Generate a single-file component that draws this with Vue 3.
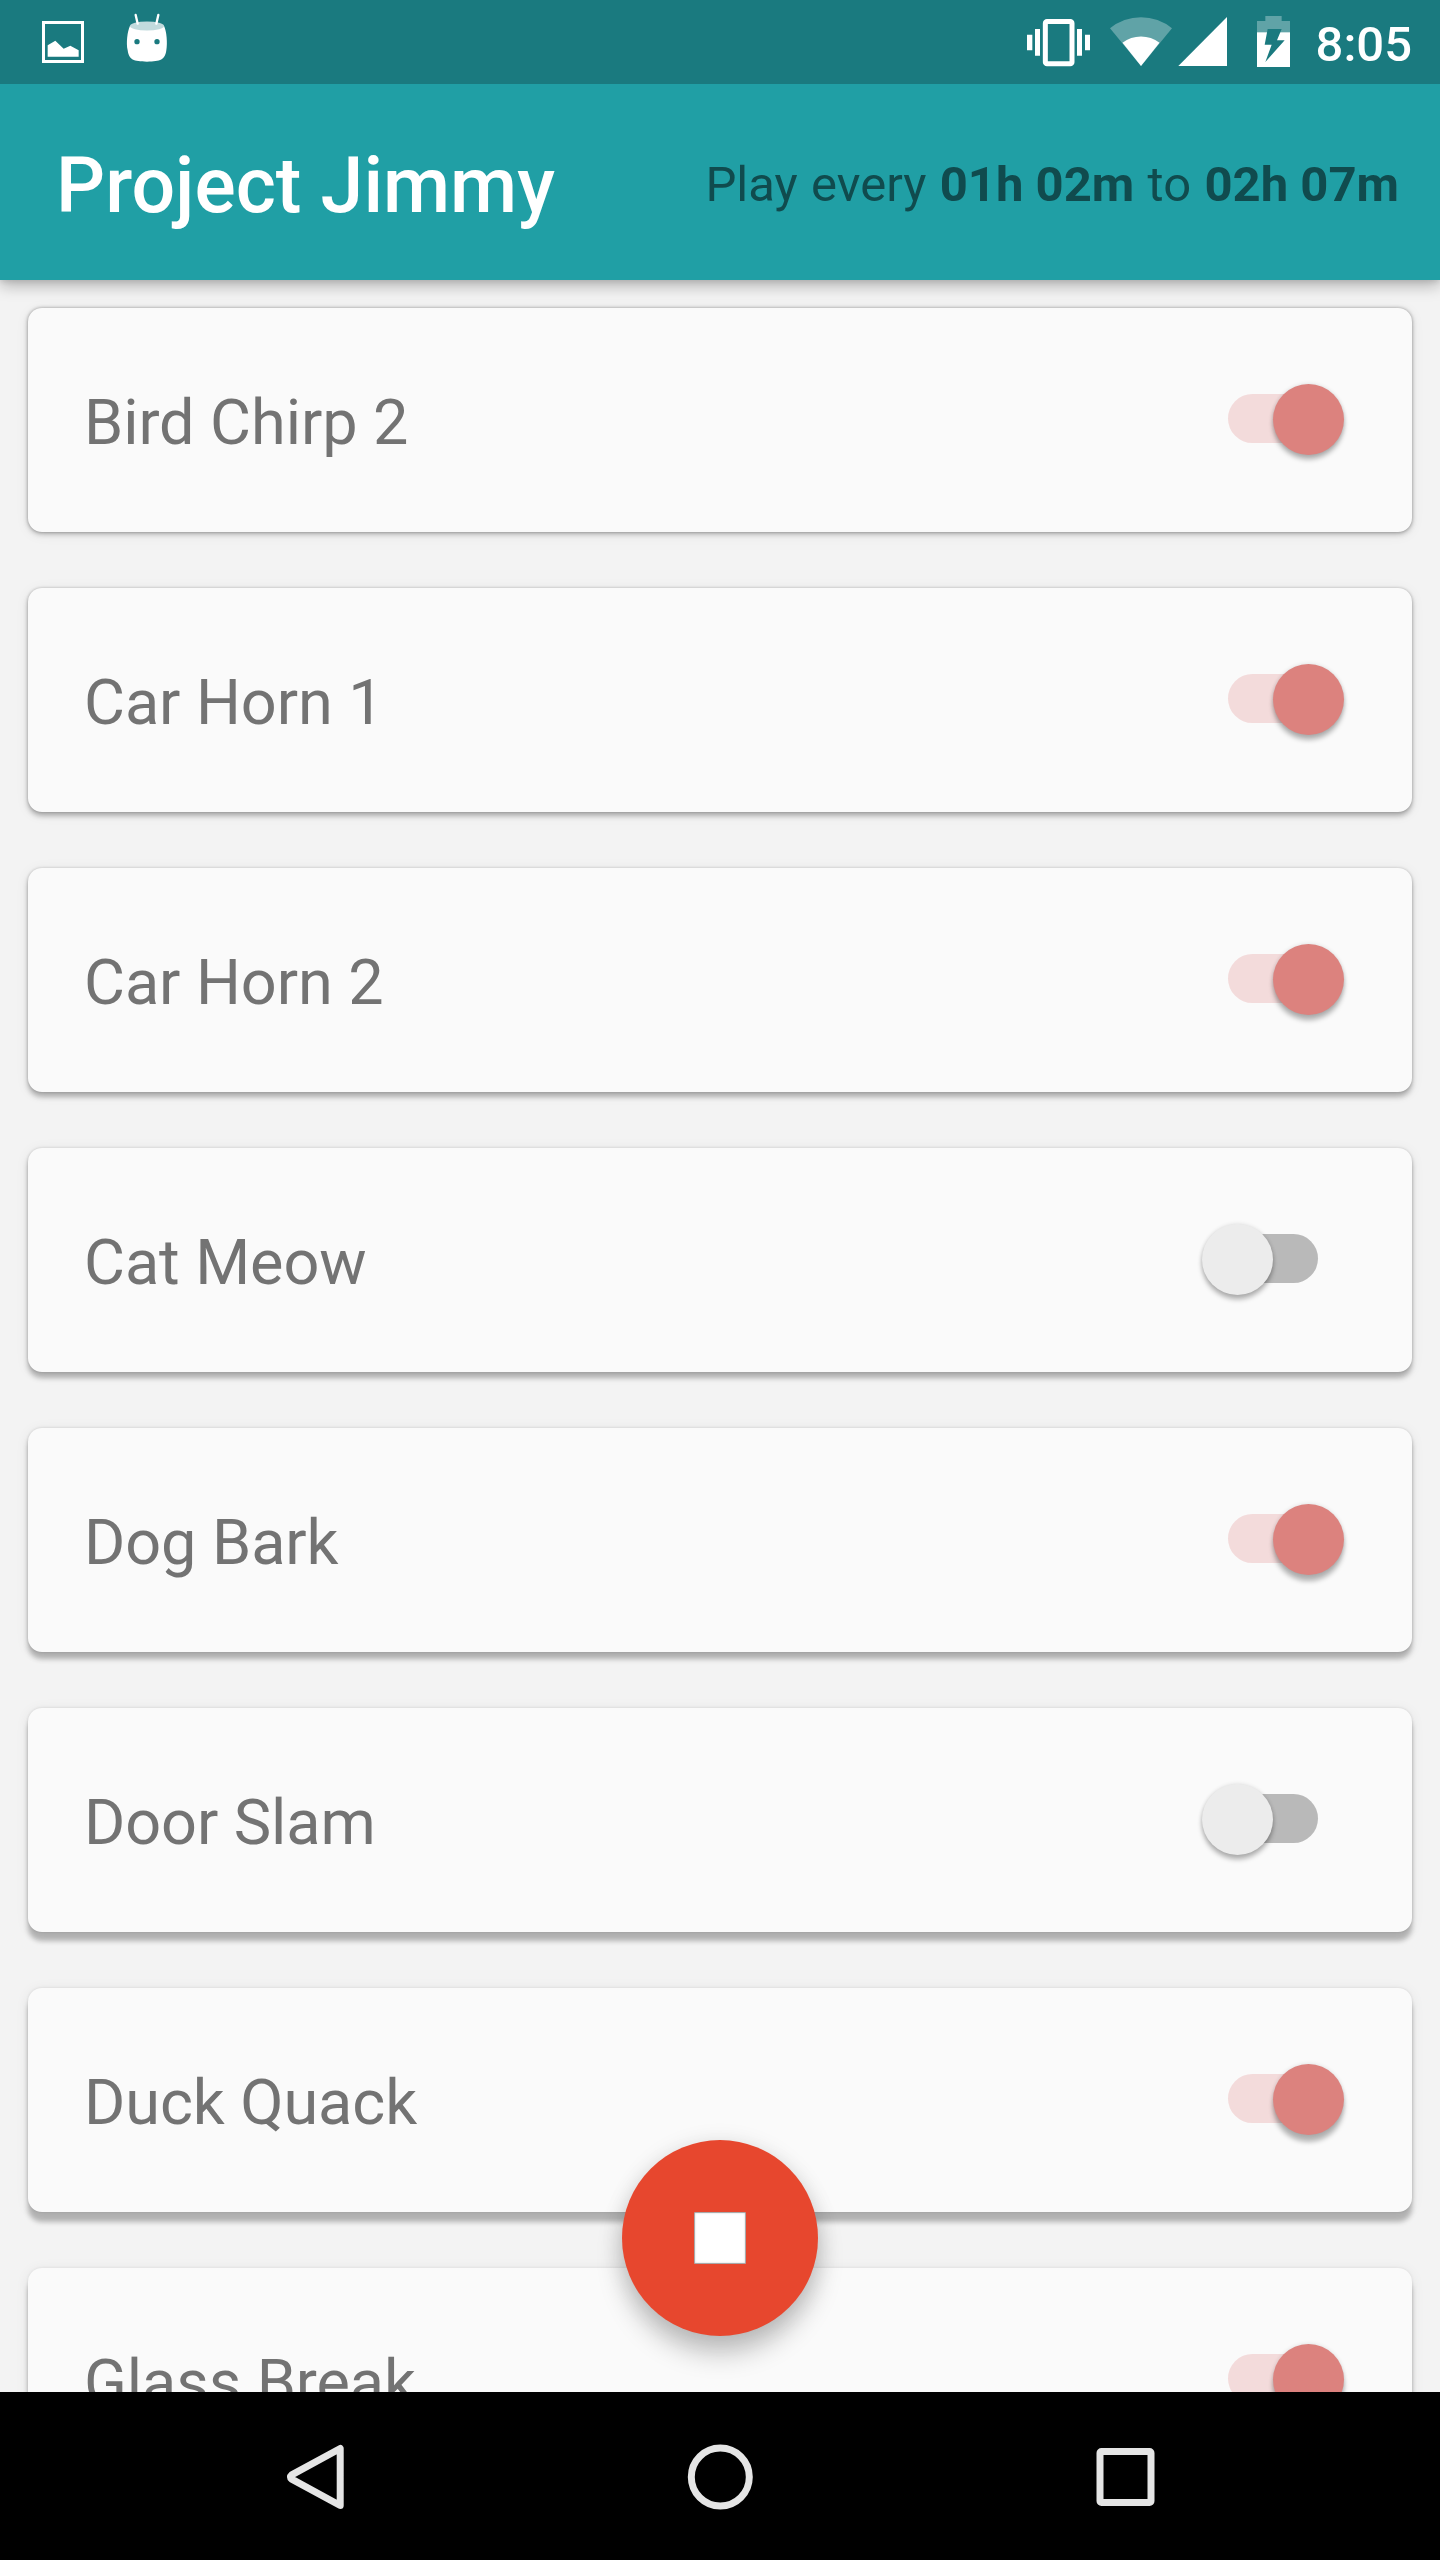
<script setup>
const sounds = [
  { name: 'Bird Chirp 2', on: true },
  { name: 'Car Horn 1', on: true },
  { name: 'Car Horn 2', on: true },
  { name: 'Cat Meow', on: false },
  { name: 'Dog Bark', on: true },
  { name: 'Door Slam', on: false },
  { name: 'Duck Quack', on: true },
  { name: 'Glass Break', on: true }
]

// Cards further down the screen cast a longer shadow.
const cardShadow = (i) => ({
  boxShadow: `0 ${(1.8 + i * 1.25).toFixed(2)}px 5px rgba(0,0,0,.25), 0 0 3px rgba(0,0,0,${(0.24 - i * 0.022).toFixed(3)}), 0 2px 14px rgba(0,0,0,.07)`
})
const thumbShadow = (i) => ({
  boxShadow: `0 ${(4.5 + i * 0.4).toFixed(1)}px 5px rgba(0,0,0,.28), 0 0 4px rgba(0,0,0,.12)`
})
</script>

<template>
  <div class="screen">
    <header class="status">
      <div class="group notices">
        <svg width="42" height="42" viewBox="0 0 126 126">
          <rect x="4.5" y="4.5" width="117" height="117" fill="none" stroke="#fff" stroke-width="9" />
          <path d="M17 107V73L40 59L65 83L85 74L110 88V107Z" fill="#fff" />
        </svg>
        <svg width="42" height="50" viewBox="378 40 126 150">
          <path d="M390 78C382 95 378 130 383 152C387 180 400 186 441 186C482 186 495 180 499 152C503 130 500 95 492 78Z" fill="#fff" />
          <ellipse cx="441" cy="79" rx="51" ry="13.5" fill="#c2dbdd" />
          <path d="M407 46L413 72M475 46L469 72" stroke="#fff" stroke-width="7" stroke-linecap="round" />
          <circle cx="411" cy="126" r="8" fill="#1a7a7f" />
          <circle cx="471" cy="126" r="8" fill="#1a7a7f" />
        </svg>
      </div>
      <div class="group system">
        <svg width="63" height="52" viewBox="81 48 189 156" fill="#fff">
          <path d="M81 104H97V151H81ZM105 87H120V167H105ZM231 87H246V167H231ZM255 104H270V151H255Z" />
          <rect x="136" y="64.500" width="80" height="127" rx="5" fill="none" stroke="#fff" stroke-width="15" />
        </svg>
        <svg class="wifi" width="62" height="52" viewBox="330 48 186 156">
          <path d="M423 198L330 85A146 146 0 0 1 516 85Z" fill="#60a3a7" />
          <path d="M423 198L367.500 128A92 92 0 0 1 478.500 128Z" fill="#fff" />
        </svg>
        <svg class="signal" width="49" height="52" viewBox="534 48 147 156">
          <path d="M535 198H681V51Z" fill="#fff" />
        </svg>
        <svg class="battery" width="33" height="52" viewBox="771 48 99 156">
          <path d="M771 97V63H796V48H845V63H870V97Z" fill="#60a3a7" />
          <path d="M771 97H870V201H771Z" fill="#fff" />
          <path d="M803 87H845L831 121H854L796 186L815 134H794Z" fill="#1a7a7f" />
        </svg>
        <span class="clock">8:05</span>
      </div>
    </header>

    <div class="appbar">
      <h1>Project Jimmy</h1>
      <p>Play every <b>01h 02m</b> to <b>02h 07m</b></p>
    </div>

    <main class="list">
      <section v-for="(s, i) in sounds" :key="s.name" class="card" :style="cardShadow(i)">
        <span class="name">{{ s.name }}</span>
        <span class="switch" :class="{ on: s.on }">
          <i class="thumb" :style="thumbShadow(s.on ? i : 0)"></i>
        </span>
      </section>
    </main>

    <button class="fab" aria-label="Stop"><i></i></button>

    <nav class="navbar">
      <svg width="66" height="66" viewBox="0 0 66 66">
        <path d="M58.200 4.500V61.500L9.700 35.200Q7.200 33 9.700 30.800Z" />
      </svg>
      <svg width="66" height="66" viewBox="0 0 66 66"><circle cx="33.300" cy="33" r="29" /></svg>
      <svg width="66" height="66" viewBox="0 0 66 66"><rect x="8" y="7.500" width="51" height="51" rx="1.500" /></svg>
    </nav>
  </div>
</template>

<style>
body {
  margin: 0;
}
</style>

<style scoped>
.screen {
  position: relative;
  display: flex;
  flex-direction: column;
  width: 1440px;
  height: 2560px;
  overflow: hidden;
  background: #f3f3f3;
  font-family: Roboto, sans-serif;
}
svg {
  display: block;
  flex: none;
}
.status {
  position: relative;
  z-index: 3;
  flex: none;
  display: flex;
  justify-content: space-between;
  height: 84px;
  box-sizing: border-box;
  padding: 0 28px 0 42px;
  background: #1a7a7f;
}
.group {
  display: flex;
  align-items: flex-start;
}
.notices {
  gap: 42px;
}
.notices svg:first-child {
  margin-top: 21px;
}
.notices svg:last-child {
  margin-top: 13.33px;
}
.system svg {
  margin-top: 16px;
}
.system .wifi {
  margin-left: 20px;
}
.system .signal {
  margin-left: 6px;
}
.system .battery {
  margin-left: 30px;
}
.clock {
  margin-left: 26px;
  font-size: 49px;
  font-weight: 500;
  line-height: 89px;
  color: #fff;
}
.appbar {
  position: relative;
  z-index: 2;
  flex: none;
  display: flex;
  align-items: center;
  justify-content: space-between;
  height: 196px;
  box-sizing: border-box;
  padding: 8px 41px 0 56px;
  background: #209fa5;
  box-shadow: 0 6px 14px rgba(0, 0, 0, .26), 0 2px 5px rgba(0, 0, 0, .08);
}
h1 {
  margin: 0;
  font-size: 77px;
  font-weight: 500;
  line-height: 90px;
  color: #fff;
}
p {
  margin: -2px 0 0;
  font-size: 49px;
  line-height: 58px;
  word-spacing: 1.200px;
  color: #104b4e;
}
b {
  font-weight: 700;
  word-spacing: 0;
}
.list {
  flex: 1;
  min-height: 0;
  display: flex;
  flex-direction: column;
  gap: 56px;
  padding: 28px 28px 0;
  overflow: hidden;
}
.card {
  flex: none;
  display: flex;
  align-items: center;
  justify-content: space-between;
  height: 224px;
  box-sizing: border-box;
  padding: 0 94px 0 56px;
  border-radius: 14px;
  background: #fafafa;
}
.name {
  padding-top: 5px;
  font-size: 63px;
  line-height: 74px;
  letter-spacing: -.08px;
  color: #737373;
}
.switch {
  position: relative;
  width: 90px;
  height: 49px;
  margin-top: -3px;
  border-radius: 25px;
  background: #b9b9b9;
}
.thumb {
  position: absolute;
  top: -10px;
  left: -26.500px;
  width: 71px;
  height: 71px;
  border-radius: 50%;
  background: #ececec;
}
.switch.on {
  background: #f3dbdb;
}
.on .thumb {
  left: 45px;
  background: #dc827e;
}
.fab {
  position: absolute;
  z-index: 2;
  left: 622px;
  top: 2140px;
  display: flex;
  align-items: center;
  justify-content: center;
  width: 196px;
  height: 196px;
  padding: 0;
  border: 0;
  border-radius: 50%;
  background: #e7472e;
  box-shadow: 0 18px 26px rgba(0, 0, 0, .22), 0 2px 22px rgba(0, 0, 0, .1);
}
.fab i {
  width: 52px;
  height: 52px;
  box-sizing: border-box;
  border: 1px solid #a9a9a9;
  border-radius: 1px;
  background: #fff;
  box-shadow: inset 0 0 2px rgba(0, 0, 0, .2);
}
.navbar {
  position: relative;
  z-index: 3;
  flex: none;
  display: flex;
  align-items: center;
  justify-content: center;
  gap: 339px;
  height: 168px;
  box-sizing: border-box;
  padding-top: 1px;
  background: #000;
}
.navbar svg {
  fill: none;
  stroke: #e5e5e5;
  stroke-width: 7;
  stroke-linejoin: round;
}
</style>
